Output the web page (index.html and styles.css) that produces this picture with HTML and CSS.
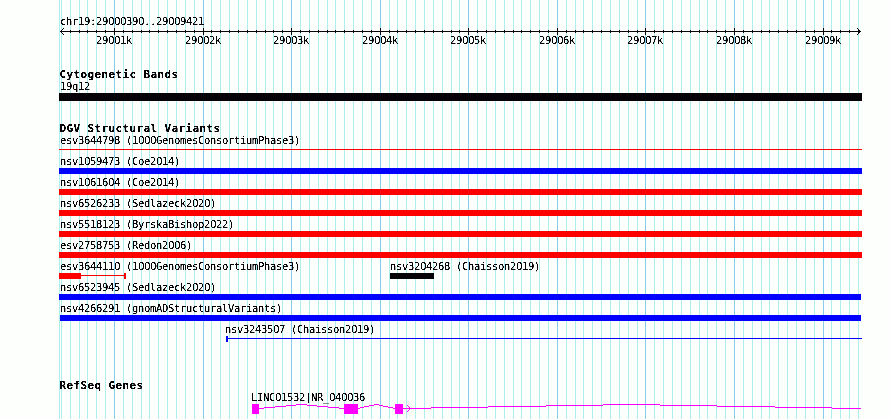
FILE: index.html
```html
<!DOCTYPE html>
<html lang="en">
<head>
<meta charset="utf-8">
<title>chr19:29000390..29009421</title>
<link rel="stylesheet" href="styles.css">
</head>
<body>
<svg class="defs" width="0" height="0" aria-hidden="true">
  <filter id="crisp" x="0" y="0" width="100%" height="100%" color-interpolation-filters="sRGB">
    <feComponentTransfer><feFuncA type="linear" slope="4" intercept="-1.2"/></feComponentTransfer>
  </filter>
</svg>
<main class="browser">
  <svg class="grid" width="803" height="419" shape-rendering="crispEdges" aria-hidden="true">
    <path id="minor" class="minor"/><path id="major" class="major"/>
  </svg>
  <header class="scale">
    <p class="label">chr19:29000390..29009421</p>
    <svg class="ruler" width="803" height="7" shape-rendering="crispEdges"><path id="ticks"/></svg>
    <svg id="numbers" class="numbers" width="803" height="13"></svg>
  </header>
  <section class="cyto">
    <h2>Cytogenetic Bands</h2>
    <p class="label">19q12</p>
    <div class="band"></div>
  </section>
  <section class="variants">
    <h2>DGV Structural Variants</h2>
    <div class="row"><p class="label">esv3644798 (1000GenomesConsortiumPhase3)</p><div class="thin red"></div></div>
    <div class="row"><p class="label">nsv1059473 (Coe2014)</p><div class="bar blue"></div></div>
    <div class="row"><p class="label">nsv1061604 (Coe2014)</p><div class="bar red"></div></div>
    <div class="row"><p class="label">nsv6526233 (Sedlazeck2020)</p><div class="bar red"></div></div>
    <div class="row"><p class="label">nsv5518123 (ByrskaBishop2022)</p><div class="bar red"></div></div>
    <div class="row"><p class="label">esv2758753 (Redon2006)</p><div class="bar red"></div></div>
    <div class="row pair">
      <div class="first"><p class="label">esv3644110 (1000GenomesConsortiumPhase3)</p>
        <div class="span"><i class="box red"></i><i class="link red"></i><i class="cap red"></i></div></div>
      <div><p class="label">nsv3204268 (Chaisson2019)</p><div class="bar short black"></div></div>
    </div>
    <div class="row"><p class="label">nsv6523945 (Sedlazeck2020)</p><div class="bar blue trim"></div></div>
    <div class="row"><p class="label">nsv4266291 (gnomADStructuralVariants)</p><div class="bar blue trim inset"></div></div>
    <div class="row late"><p class="label">nsv3243507 (Chaisson2019)</p><div class="span"><i class="cap blue"></i><i class="link blue"></i></div></div>
  </section>
  <section class="genes">
    <h2>RefSeq Genes</h2>
    <p class="label">LINC01532|NR_040036</p>
    <svg class="gene" width="803" height="10" shape-rendering="crispEdges">
      <path class="exon" d="M193 0h7v10h-7zM285 0h14v10h-14zM336 0h8v10h-8z"/>
      <path class="intron" d="M200 4.5h5M205 3.5h11M216 2.5h11M227 1.5h10M237 .5h11M248 1.5h10M258 2.5h11M269 3.5h11M280 4.5h5M299 4.5h2M301 3.5h4M305 2.5h5M310 1.5h5M315 .5h5M320 1.5h4M324 2.5h5M329 3.5h5M334 4.5h2M344 4.5h28M372 3.5h57M429 2.5h58M487 1.5h57M544 .5h57M601 1.5h57M658 2.5h58M716 3.5h57M773 4.5h29"/>
      <path class="intron" d="M348.5 1v1M349.5 2v1M350.5 3v1M351.5 4v1M350.5 5v1M349.5 6v1M348.5 7v1"/>
    </svg>
  </section>
</main>
<script src="scale.js"></script>
</body>
</html>
```
FILE: styles.css
```css
* { box-sizing: border-box; margin: 0; padding: 0; }
body { background: #fdfffc; color: #050307; overflow: hidden; }
.defs { position: absolute; }
.browser { position: relative; width: 803px; height: 419px; margin-left: 59px; overflow: hidden; }
.browser > header, .browser > section { position: relative; }
svg { display: block; }
.grid { position: absolute; inset: 0; }
.minor { stroke: #afeeee; }
.major { stroke: #87ceeb; }
.label, h2 { white-space: pre; filter: url(#crisp); font-family: "DejaVu Sans Mono", monospace; }
.label { height: 15px; padding: 2px 0 0 1px; font-size: 10.5px; line-height: 13px; letter-spacing: -.322px; }
h2 { padding-left: .4px; font-size: 11px; line-height: 18px; letter-spacing: .378px; font-weight: bold; }
.scale { padding-top: 13px; height: 66px; }
.ruler path { stroke: #050307; fill: none; }
.numbers text { font: 10.5px "DejaVu Sans Mono", monospace; fill: #050307; letter-spacing: -.322px; }
.numbers { filter: url(#crisp); }
/* plain zeros, kept on the 6px character grid */
.label .zero, .numbers .zero { font-family: "DejaVu Sans", sans-serif; letter-spacing: -.68px; }
.cyto { height: 54px; }
.cyto h2, .variants h2, .genes h2 { height: 12px; }
.band { height: 8px; background: #050307; }
.variants { height: 257px; }
.row { height: 21px; }
.bar { height: 6px; }
.thin { height: 1px; margin-top: 2px; }
.red { background: #f00; }
.blue { background: #00f; }
.black { background: #050307; }
.trim { width: 802px; }
.inset { margin-left: 1px; width: 801px; }
.pair { display: flex; }
.first { width: 330px; }
.short { width: 44px; margin-left: 1px; }
.span { display: flex; align-items: flex-start; height: 6px; }
.box { width: 22px; height: 6px; }
.first .link { width: 43px; }
.link { height: 1px; margin-top: 2px; flex: none; }
.cap { width: 2px; height: 6px; }
.late { padding-left: 167px; }
.late .label { margin-left: -2px; }
.late .link { width: 634px; }
.genes .label { padding-left: 192px; }
.exon { fill: #f0f; }
.intron { stroke: #f0f; }
```
FILE: scale.js
```js
const origin = 2.35, step = 8.858;
let minor = 'M.5 0v419', major = '', ticks = 'M1 3.5h801M4.5 0v1M3.5 1v1M2.5 2v1M2.5 4v1M3.5 5v1M4.5 6v1M798.5 0v1M799.5 1v1M800.5 2v1M800.5 4v1M799.5 5v1M798.5 6v1';
const numbers = document.getElementById('numbers');
for (let i = 0; i <= 90; i++) {
  const x = Math.floor(origin + i * step), isMajor = i % 10 === 6;
  if (isMajor) {
    major += `M${x + .5} 0v419`;
    ticks += `M${x + .5} 0v7`;
    const t = document.createElementNS('http://www.w3.org/2000/svg', 'text');
    t.setAttribute('x', x - 18);
    t.setAttribute('y', 9);
    t.innerHTML = `${29001 + (i - 6) / 10}k`.replace(/0+/g, '<tspan class="zero">$&</tspan>');
    numbers.append(t);
  } else {
    minor += `M${x + .5} 0v419`;
    if (i > 0) ticks += `M${x + .5} 2v3`;
  }
}
document.getElementById('minor').setAttribute('d', minor);
document.getElementById('major').setAttribute('d', major);
document.getElementById('ticks').setAttribute('d', ticks);
for (const label of document.querySelectorAll('.label')) {
  label.innerHTML = label.textContent.replace(/0+/g, '<span class="zero">$&</span>');
}
```
